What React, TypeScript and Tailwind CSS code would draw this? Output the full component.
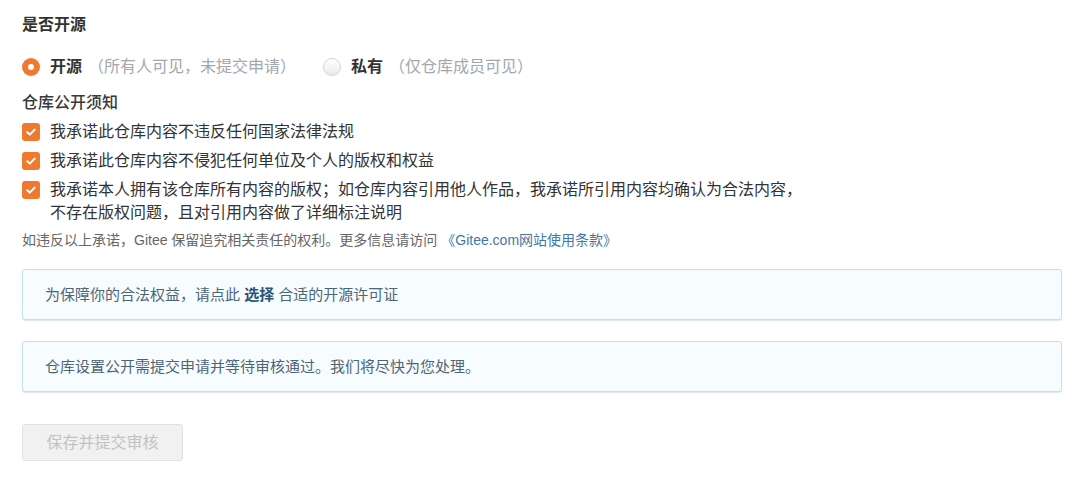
const FONT = { fontFamily: '"Liberation Sans", "Noto Sans CJK SC", sans-serif' };

function Radio({ checked }: { checked?: boolean }) {
  if (checked) {
    return (
      <span className="flex h-[18px] w-[18px] shrink-0 items-center justify-center rounded-full bg-[#ef7a2f]">
        <span className="h-[6px] w-[6px] rounded-full bg-white" />
      </span>
    );
  }
  return (
    <span className="h-[18px] w-[18px] shrink-0 rounded-full border border-[#d2d4d8] bg-gradient-to-b from-white to-[#e9eaec]" />
  );
}

function Check() {
  return (
    <span className="mt-[2.5px] flex h-[18px] w-[18px] shrink-0 items-center justify-center rounded-[3px] bg-[#ef7a2f]">
      <svg width="12" height="12" viewBox="0 0 12 12" fill="none">
        <polyline
          points="2.3,6.3 4.8,8.6 9.7,3.6"
          stroke="white"
          strokeWidth="2"
          strokeLinecap="round"
          strokeLinejoin="round"
        />
      </svg>
    </span>
  );
}

const pledges = [
  ["我承诺此仓库内容不违反任何国家法律法规"],
  ["我承诺此仓库内容不侵犯任何单位及个人的版权和权益"],
  [
    "我承诺本人拥有该仓库所有内容的版权；如仓库内容引用他人作品，我承诺所引用内容均确认为合法内容，",
    "不存在版权问题，且对引用内容做了详细标注说明",
  ],
];

export default function App() {
  return (
    <div className="min-h-[482px] bg-white pl-[22px] pr-[18px] pt-[13px] text-[#333]" style={FONT}>
      {/* 是否开源 */}
      <div className="text-[16px] font-semibold leading-[23px] text-[#333]">是否开源</div>

      <div className="mt-[19px] flex items-center text-[16px] leading-[23px]">
        <Radio checked />
        <span className="ml-[10px] font-semibold text-[#333]">开源</span>
        <span className="ml-[6px] text-[#a3a7b0]">（所有人可见，未提交申请）</span>
        <span className="ml-[27px]" />
        <Radio />
        <span className="ml-[10px] font-semibold text-[#333]">私有</span>
        <span className="ml-[6px] text-[#a3a7b0]">（仅仓库成员可见）</span>
      </div>

      {/* 仓库公开须知 */}
      <div className="mt-[13px] text-[16px] font-medium leading-[23px] text-[#3a3a3a]">仓库公开须知</div>

      <ul className="mt-[6px] space-y-[6px]">
        {pledges.map((lines, i) => (
          <li key={i} className="flex items-start gap-[10px] text-[16px] leading-[23px] text-[#333]">
            <Check />
            <div>
              {lines.map((l, j) => (
                <div key={j}>{l}</div>
              ))}
            </div>
          </li>
        ))}
      </ul>

      <p className="mt-[6px] text-[14px] leading-[20px] text-[#666]">
        如违反以上承诺，Gitee 保留追究相关责任的权利。更多信息请访问 <span className="text-[#3f77a8]">《Gitee.com网站使用条款》</span>
      </p>

      {/* 提示框 */}
      <div className="mt-[19px] rounded-[3px] border border-[#c4e0e8] bg-[#f7fcfe] px-[22px] py-[13px] text-[15px] leading-[23px] text-[#4d6577] shadow-[0_1px_1px_rgba(150,190,205,0.35)]">
        为保障你的合法权益，请点此 <span className="font-semibold text-[#2b5577]">选择</span> 合适的开源许可证
      </div>

      <div className="mt-[21px] rounded-[3px] border border-[#c4e0e8] bg-[#f7fcfe] px-[22px] py-[13px] text-[15px] leading-[23px] text-[#4d6577] shadow-[0_1px_1px_rgba(150,190,205,0.35)]">
        仓库设置公开需提交申请并等待审核通过。我们将尽快为您处理。
      </div>

      <button
        disabled
        className="mt-[32px] flex h-[37px] w-[161px] items-center justify-center rounded-[3px] border border-[#e2e2e2] bg-[#f1f1f1] text-[16px] text-[#c2c2c2]"
      >
        保存并提交审核
      </button>
    </div>
  );
}
